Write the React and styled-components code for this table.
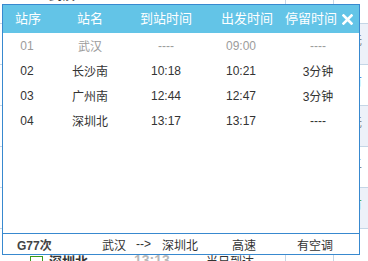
import React from "react";
import styled, { createGlobalStyle } from "styled-components";

const Global = createGlobalStyle`
  html, body { margin: 0; padding: 0; background: #fff; }
  body { font-family: "Liberation Sans", "Noto Sans CJK SC", sans-serif; overflow: hidden; }
`;

const FONT = `"Liberation Sans", "Noto Sans CJK SC", sans-serif`;

const Page = styled.div`
  position: relative;
  width: 368px;
  height: 261px;
  overflow: hidden;
  background: #fff;
`;

/* ---------- background page (partly hidden behind popup) ---------- */
const BgTable = styled.div`
  margin-top: -17px;
  display: flex;
  flex-direction: column;
`;

const BgRow = styled.div`
  display: grid;
  grid-template-columns: 285px 48px 1fr;
  height: 40px;
  border-bottom: 1px solid #c5d6e6;
`;

const BgCell = styled.div`
  display: flex;
  flex-direction: column;
  padding-top: ${(p) => (p.$first ? "4px" : "7px")};
  gap: 6px;
  border-left: ${(p) => (p.$line ? "1px solid #c5d6e6" : "none")};
  background: ${(p) => (p.$tint ? "#edf1f9" : "transparent")};
  align-items: ${(p) => (p.$center ? "center" : "stretch")};
  font-size: 12px;
  color: #333;
`;

const BgLine = styled.div`
  display: flex;
  align-items: center;
  height: 12px;
  padding-left: 30px;
  font-family: ${FONT};
`;

const BgBadge = styled.span`
  display: inline-block;
  width: 11px;
  height: 7px;
  border: 1px solid ${(p) => p.$color};
  margin-right: 6px;
`;

const BgName = styled.span`
  font-weight: bold;
  font-size: 13px;
  width: 85px;
`;

const BgTime = styled.span`
  font-weight: bold;
  font-size: 14px;
  color: #b8b8b8;
  width: 72px;
`;

const BgSide = styled.span`
  color: ${(p) => p.$color || "#888"};
  font-size: 12px;
  padding-left: 16px;
`;

/* ---------- popup ---------- */
const Popup = styled.div`
  position: absolute;
  left: 2px;
  top: 4px;
  width: 356px;
  height: 249px;
  border: 1px solid #3889cf;
  background: #fff;
  display: flex;
  flex-direction: column;
  font-family: ${FONT};
`;

const Header = styled.div`
  display: grid;
  grid-template-columns: 50px 74px 78px 84px 44px 1fr;
  align-items: center;
  height: 28px;
  background: #63c4e7;
  color: #fff;
  font-size: 13px;
`;

const HeadCell = styled.div`
  display: flex;
  justify-content: center;
  white-space: nowrap;
  line-height: 28px;
`;

const Close = styled.div`
  display: flex;
  justify-content: flex-end;
  padding-right: 6px;
  align-items: center;
`;

const Body = styled.div`
  flex: 1;
  display: flex;
  flex-direction: column;
`;

const Row = styled.div`
  display: grid;
  grid-template-columns: 48px 78px 74px 76px 78px;
  height: 25px;
  align-items: center;
  font-size: 12px;
  color: ${(p) => (p.$muted ? "#9c9c9c" : "#333")};
`;

const Cell = styled.div`
  text-align: center;
  white-space: nowrap;
`;

const Footer = styled.div`
  display: grid;
  grid-template-columns: 85px 34px 26px 70px 65px auto;
  align-items: center;
  height: 20px;
  padding-left: 14px;
  border-top: 1px solid #3889cf;
  font-size: 12px;
  color: #333;
`;

const FootItem = styled.span`
  font-weight: ${(p) => (p.$bold ? "bold" : "normal")};
  color: ${(p) => (p.$bold ? "#444" : "#333")};
  white-space: nowrap;
`;

const XIcon = () => (
  <svg width="11" height="11" viewBox="0 0 11 11">
    <path d="M1.5 1.5 L9.5 9.5 M9.5 1.5 L1.5 9.5" stroke="#fff" strokeWidth="2.6" strokeLinecap="square" />
  </svg>
);

const stops = [
  { no: "01", name: "武汉", arr: "----", dep: "09:00", stay: "----", muted: true },
  { no: "02", name: "长沙南", arr: "10:18", dep: "10:21", stay: "3分钟" },
  { no: "03", name: "广州南", arr: "12:44", dep: "12:47", stay: "3分钟" },
  { no: "04", name: "深圳北", arr: "13:17", dep: "13:17", stay: "----" },
];

const bgRows = [
  { side: "--", color: "#888", tint: false },
  { side: "无", color: "#888", tint: true },
  { side: "有", color: "#2a6fd0", tint: false },
  { side: "无", color: "#888", tint: true },
  { side: "二", color: "#888", tint: false },
  { side: "有", color: "#2a9a1a", tint: true },
  { side: "--", color: "#888", tint: false },
];

export default function App() {
  return (
    <Page>
      <Global />
      <BgTable>
        {bgRows.map((r, i) => (
          <BgRow key={i}>
            <BgCell $first={i === 0}>
              <BgLine>
                <BgBadge $color="#8aa0c0" />
                <BgName>武汉</BgName>
              </BgLine>
              <BgLine>
                <BgBadge $color={i === 6 ? "#3a9a1a" : "#8aa0c0"} />
                <BgName>深圳北</BgName>
                <BgTime>13:13</BgTime>
                <span>当日到达</span>
              </BgLine>
            </BgCell>
            <BgCell $line $center $first={i === 0}>
              <span>{i === 0 ? "2" : "--"}</span>
            </BgCell>
            <BgCell $line $tint={r.tint}>
              <BgSide $color={r.color}>{r.side}</BgSide>
            </BgCell>
          </BgRow>
        ))}
      </BgTable>

      <Popup>
        <Header>
          <HeadCell>站序</HeadCell>
          <HeadCell>站名</HeadCell>
          <HeadCell>到站时间</HeadCell>
          <HeadCell>出发时间</HeadCell>
          <HeadCell>停留时间</HeadCell>
          <Close>
            <XIcon />
          </Close>
        </Header>
        <Body>
          {stops.map((s) => (
            <Row key={s.no} $muted={s.muted}>
              <Cell>{s.no}</Cell>
              <Cell>{s.name}</Cell>
              <Cell>{s.arr}</Cell>
              <Cell>{s.dep}</Cell>
              <Cell>{s.stay}</Cell>
            </Row>
          ))}
        </Body>
        <Footer>
          <FootItem $bold>G77次</FootItem>
          <FootItem>武汉</FootItem>
          <FootItem>--&gt;</FootItem>
          <FootItem>深圳北</FootItem>
          <FootItem>高速</FootItem>
          <FootItem>有空调</FootItem>
        </Footer>
      </Popup>
    </Page>
  );
}
